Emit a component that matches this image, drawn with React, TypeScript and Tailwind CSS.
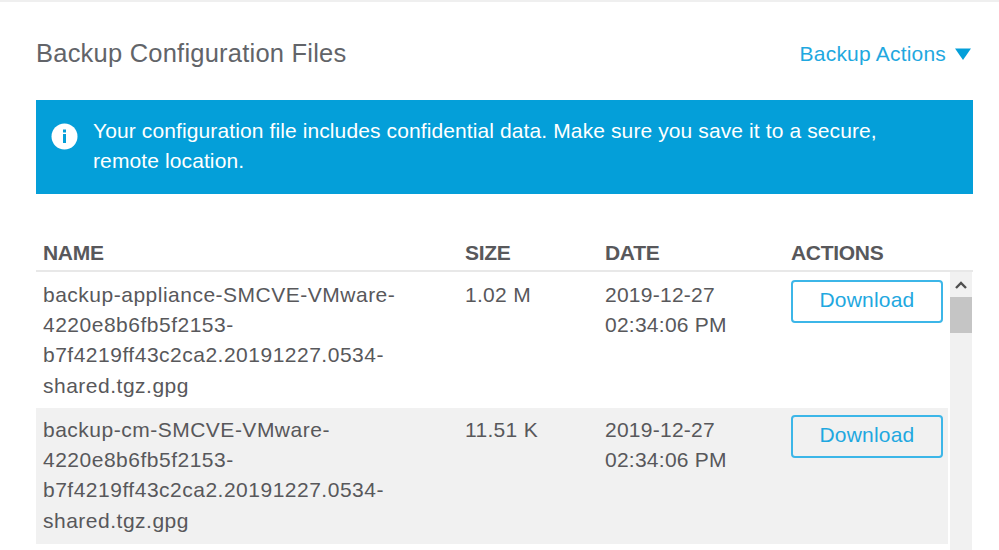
import React from "react";

const Row = ({ lines, size, shaded }: { lines: string[]; size: string; shaded?: boolean }) => (
  <div className={`flex h-[136px] text-[21px] leading-[30.2px] text-[#58585b] ${shaded ? "bg-[#f1f1f1] pt-[7px]" : "bg-white pt-[8px]"}`}>
    <div className="w-[429px] pl-[7px] tracking-[0.5px]">
      {lines.map((l) => (
        <div key={l} className="whitespace-nowrap">{l}</div>
      ))}
    </div>
    <div className="w-[140px] tracking-[0.3px]">{size}</div>
    <div className="w-[186px] tracking-[0.25px]">
      <div>2019-12-27</div>
      <div>02:34:06 PM</div>
    </div>
    <div>
      <button className="flex h-[43px] w-[152px] items-start justify-center rounded-[4px] border-2 border-[#3cb6e8] pt-[3px] text-[21px] leading-[30px] tracking-[0.2px] text-[#1fa8e0]">
        Download
      </button>
    </div>
  </div>
);

export default function App() {
  return (
    <div className="h-[550px] w-[999px] overflow-hidden bg-white font-['Liberation_Sans',Arial,sans-serif]">
      <div className="h-[2px] bg-[#efefef]" />
      <div className="pl-[36px] pr-[26px]">
        <div className="flex h-[98px] items-center justify-between pt-[5px]">
          <div className="text-[25.5px] font-light tracking-[0.22px] text-[#626469]">Backup Configuration Files</div>
          <div className="flex items-center gap-[9px] pr-[2px] text-[21px] tracking-[0.2px] text-[#1fa8e0]">
            Backup Actions
            <svg width="16" height="12" viewBox="0 0 16 12" className="fill-[#049fd9]">
              <path d="M0 0.5H16L8 12Z" />
            </svg>
          </div>
        </div>
        <div className="flex h-[94px] bg-[#049fd9] pl-[15px] text-[21px] font-normal leading-[30px] tracking-[0.11px] text-white">
          <svg width="27" height="27" viewBox="0 0 27 27" className="mt-[23px] shrink-0">
            <circle cx="13.5" cy="13.5" r="13" fill="#fff" />
            <rect x="12" y="11" width="3" height="9" fill="#049fd9" />
            <rect x="12" y="6.5" width="3" height="3" fill="#049fd9" />
          </svg>
          <div className="ml-[15px] mt-[16px] w-[800px]">
            Your configuration file includes confidential data. Make sure you save it to a secure, remote location.
          </div>
        </div>
        <div className="flex h-[78px] items-end border-b-2 border-[#e8e8e8] pb-[2px] pl-[7px] text-[21px] font-bold leading-[30px] tracking-[-0.3px] text-[#58585b]">
          <div className="w-[422px]">NAME</div>
          <div className="w-[140px]">SIZE</div>
          <div className="w-[186px]">DATE</div>
          <div>ACTIONS</div>
        </div>
        <div className="flex h-[280px]">
          <div className="w-[912px]">
            <Row
              lines={["backup-appliance-SMCVE-VMware-", "4220e8b6fb5f2153-", "b7f4219ff43c2ca2.20191227.0534-", "shared.tgz.gpg"]}
              size="1.02 M"
            />
            <Row
              shaded
              lines={["backup-cm-SMCVE-VMware-", "4220e8b6fb5f2153-", "b7f4219ff43c2ca2.20191227.0534-", "shared.tgz.gpg"]}
              size="11.51 K"
            />
          </div>
          <div className="ml-[2px] w-[22px] bg-[#f1f1f1]">
            <div className="flex h-[25px] items-center justify-center">
              <svg width="12" height="8" viewBox="0 0 12 8" fill="none" stroke="#505050" strokeWidth="2.4">
                <path d="M1 7L6 2L11 7" />
              </svg>
            </div>
            <div className="h-[36px] bg-[#c5c5c5]" />
          </div>
        </div>
      </div>
    </div>
  );
}
